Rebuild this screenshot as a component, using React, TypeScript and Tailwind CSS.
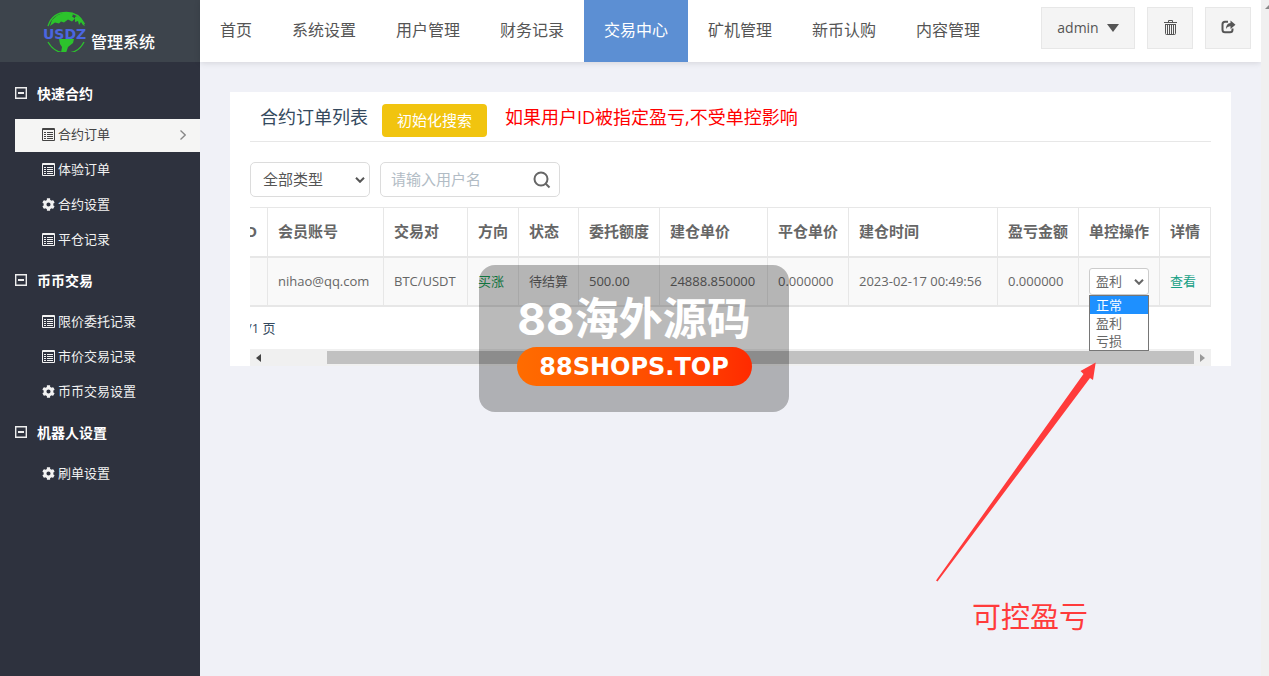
import { useState } from 'react';
import { FaCog } from 'react-icons/fa';

type IconName = 'list' | 'cog';

interface MenuItem {
  label: string;
  icon: IconName;
}

const topNav = ['首页', '系统设置', '用户管理', '财务记录', '交易中心', '矿机管理', '新币认购', '内容管理'];

const menu: { title: string; items: MenuItem[] }[] = [
  {
    title: '快速合约',
    items: [
      { label: '合约订单', icon: 'list' },
      { label: '体验订单', icon: 'list' },
      { label: '合约设置', icon: 'cog' },
      { label: '平仓记录', icon: 'list' },
    ],
  },
  {
    title: '币币交易',
    items: [
      { label: '限价委托记录', icon: 'list' },
      { label: '市价交易记录', icon: 'list' },
      { label: '币币交易设置', icon: 'cog' },
    ],
  },
  {
    title: '机器人设置',
    items: [{ label: '刷单设置', icon: 'cog' }],
  },
];

const outcomes = ['正常', '盈利', '亏损'];

function ListIcon() {
  return (
    <svg viewBox="0 0 13 13" className="size-[13px]" fill="none" stroke="currentColor" aria-hidden="true">
      <path d="M.5.5h12v12H.5zM.5 1.500h12" />
      <path d="M2 4.500h2M5 4.500h6M2 6.500h2M5 6.500h6M2 8.500h2M5 8.500h6M2 10.500h2M5 10.500h6" />
    </svg>
  );
}

function Chevron({ className }: { className: string }) {
  return (
    <svg viewBox="0 0 10 6" className={className} fill="none" stroke="currentColor" strokeWidth="2" aria-hidden="true">
      <path d="M1 .8l4 4 4-4" />
    </svg>
  );
}

function Logo() {
  return (
    <a href="#" className="flex h-[62px] items-center bg-[#3d444c] pl-[43px] text-white">
      <span className="relative flex h-[42px] w-[48px] items-center pt-[6px]">
        <svg viewBox="0 0 46 42" className="absolute inset-0 h-[42px] w-[46px]" aria-hidden="true">
          <path
            d="M5 16C8 7 15 2.500 23.500 2.500S38 7 41.500 14M5 32c4 7 10 11 18.500 11 8 0 14-4 17.500-11"
            fill="none"
            stroke="#2cc32c"
            strokeWidth="1.300"
          />
          <path
            d="M7 16l2-6 5-4.500 7-3 8 .5 1 2-1 1.500 3 2-3 3-4-2-4 3-3-1-2 2-4-1zM32 7l2-1 5 4 3 6-2-1-2-3-2 3-1-4-3 1zM16 29h15l-1 4-5 4-2 6h-5l1-6-2-3z"
            fill="#2cc32c"
          />
        </svg>
        <span className="relative font-['DejaVu_Sans',sans-serif] text-[14px] leading-[20px] font-bold text-[#4b66e0]">USDZ</span>
      </span>
      <span className="pt-[22px] text-[16px] leading-[20px] font-medium">管理系统</span>
    </a>
  );
}

function Sidebar() {
  const [active, setActive] = useState('合约订单');

  return (
    <aside className="w-[200px] shrink-0 bg-[#2e323e]">
      <Logo />
      <nav className="pt-[9px] text-[13px] text-white">
        {menu.map((group) => (
          <section key={group.title}>
            <h2 className="flex h-[47px] items-center gap-[10px] pb-[2px] pl-[15px] text-[14px] font-bold">
              <svg viewBox="0 0 12 12" className="mb-[2px] size-[12px]" fill="none" stroke="#eee" aria-hidden="true">
                <path d="M.7.7h10.600v10.600H.7z" strokeWidth="1.400" />
                <path d="M3 6h6" strokeWidth="2" />
              </svg>
              {group.title}
            </h2>
            <ul>
              {group.items.map((item) => (
                <li key={item.label} className="py-px pl-[15px]">
                  <a
                    href="#"
                    onClick={() => { setActive(item.label); }}
                    className={`flex h-[33px] items-center gap-[3px] pr-[14px] pb-[2px] pl-[27px] ${
                      active === item.label ? 'bg-[#f5f5f4] text-[#444]' : 'text-[#f2f2f2]'
                    }`}
                  >
                    {item.icon === 'list' ? <ListIcon /> : <FaCog className="size-[13px]" />}
                    {item.label}
                    {active === item.label && (
                      <svg viewBox="0 0 6 10" className="ml-auto h-[10px] w-[6px]" fill="none" stroke="#888" aria-hidden="true">
                        <path d="M.5.5L5.200 5 .5 9.500" strokeWidth="1.300" />
                      </svg>
                    )}
                  </a>
                </li>
              ))}
            </ul>
          </section>
        ))}
      </nav>
    </aside>
  );
}

function TopBar() {
  const buttonClass = 'flex h-[42px] items-center justify-center border border-[#e7e7e7] bg-[#f4f4f4] pb-[2px] text-[#555]';

  return (
    <header className="flex h-[62px] justify-between bg-white pr-[10px] shadow-[0_1px_6px_rgba(0,0,0,0.12)]">
      <nav className="flex text-[16px] text-[#555]">
        {topNav.map((label) => (
          <a
            key={label}
            href="#"
            className={`flex items-center px-5 pb-[2px] ${label === '交易中心' ? 'bg-[#5c8fd3] text-white' : ''}`}
          >
            {label}
          </a>
        ))}
      </nav>
      <div className="flex gap-3 pt-[7px]">
        <button className={`${buttonClass} w-[94px] gap-2 text-[14px]`}>
          admin
          <svg viewBox="0 0 12 8" className="mt-[2px] h-[8px] w-[12px]" fill="currentColor" aria-hidden="true">
            <path d="M0 0h12L6 8z" />
          </svg>
        </button>
        <button aria-label="清除缓存" className={`${buttonClass} w-[46px]`}>
          <svg viewBox="0 0 13 15" className="h-[15px] w-[13px]" fill="none" stroke="currentColor" aria-hidden="true">
            <path d="M0 2.500h13M4.500 2.500V.5h4v2M1 4.500h11" />
            <path d="M1.500 4.500v9q0 1 1 1h8q1 0 1-1v-9" />
            <path d="M3.500 5v9M5.500 5v9M7.500 5v9M9.500 5v9" />
          </svg>
        </button>
        <button aria-label="退出" className={`${buttonClass} w-[46px]`}>
          <svg viewBox="0 0 15 14" className="h-[14px] w-[15px]" fill="none" stroke="currentColor" aria-hidden="true">
            <path d="M7 1.800H4Q1.500 1.800 1.500 4.300v5.400q0 2.500 2.500 2.500h5q2.500 0 2.500-2.500V8.500" strokeWidth="2" />
            <path d="M9.500.5L14.500 4.700 9.500 9V6.300Q6.500 6 5 9 5 3.500 9.500 3z" fill="currentColor" stroke="none" />
          </svg>
        </button>
      </div>
    </header>
  );
}

function OutcomeSelect() {
  const [value, setValue] = useState('盈利');

  return (
    <div className="relative w-[60px]">
      <select
        aria-label="单控操作"
        value={value}
        onChange={(e) => { setValue(e.target.value); }}
        className="block h-[27px] w-full appearance-none rounded-[3px] border border-[#ccc] bg-white pl-[6px] text-[13px]"
      >
        {outcomes.map((o) => <option key={o}>{o}</option>)}
      </select>
      <Chevron className="pointer-events-none absolute top-[11px] right-[5px] h-[6px] w-[10px]" />
      <ul className="absolute top-[27px] left-0 z-10 w-full border border-[#767676] bg-white text-[13px] leading-[18px]">
        {outcomes.map((o) => (
          <li key={o} className={`pl-[6px] ${o === '正常' ? 'bg-[#1e90ff] text-white' : ''}`}>{o}</li>
        ))}
      </ul>
    </div>
  );
}

function OrderTable() {
  const columns = [
    { title: 'ID', width: 'w-[85px] text-right' },
    { title: '会员账号', width: 'w-[116px]' },
    { title: '交易对', width: 'w-[84px]' },
    { title: '方向', width: 'w-[51px]' },
    { title: '状态', width: 'w-[60px]' },
    { title: '委托额度', width: 'w-[81px]' },
    { title: '建仓单价', width: 'w-[108px]' },
    { title: '平仓单价', width: 'w-[81px]' },
    { title: '建仓时间', width: 'w-[149px]' },
    { title: '盈亏金额', width: 'w-[81px]' },
    { title: '单控操作', width: 'w-[81px]' },
    { title: '详情', width: 'w-[51px]' },
  ];
  const cell = 'border-r border-[#e7e7e7] pl-[10px]';

  return (
    <table className="w-full table-fixed border-separate border-spacing-0 text-left whitespace-nowrap text-[#666]">
      <thead>
        <tr className="h-[51px] text-[15px]">
          {columns.map((c) => (
            <th key={c.title} className={`border-t border-r border-b-2 border-[#e7e7e7] px-[10px] pb-[2px] font-bold ${c.width}`}>
              {c.title}
            </th>
          ))}
        </tr>
      </thead>
      <tbody>
        <tr className="h-[49px] bg-[#f9f9f9] text-[13px] [&>td]:border-b-2">
          <td className={cell} />
          <td className={cell}>nihao@qq.com</td>
          <td className={cell}>BTC/USDT</td>
          <td className={`${cell} text-[#18a058]`}>买涨</td>
          <td className={cell}>待结算</td>
          <td className={cell}>500.00</td>
          <td className={cell}>24888.850000</td>
          <td className={cell}>0.000000</td>
          <td className={cell}>2023-02-17 00:49:56</td>
          <td className={cell}>0.000000</td>
          <td className={cell}><OutcomeSelect /></td>
          <td className={cell}><a href="#" className="text-[#16a085]">查看</a></td>
        </tr>
      </tbody>
    </table>
  );
}

function Scrollbar() {
  return (
    <div className="flex h-[17px] items-center justify-between bg-[#f0f0f0] px-[6px]">
      <svg viewBox="0 0 5 8" className="h-[8px] w-[5px]" fill="#444" aria-hidden="true"><path d="M5 0v8L0 4z" /></svg>
      <div className="mr-[6px] ml-[66px] h-[13px] flex-1 bg-[#c1c1c1]" />
      <svg viewBox="0 0 5 8" className="h-[8px] w-[5px]" fill="#999" aria-hidden="true"><path d="M0 0v8l5-4z" /></svg>
    </div>
  );
}

function Watermark() {
  return (
    <div className="pointer-events-none absolute top-[265px] left-[479px] z-20 flex h-[147px] w-[310px] flex-col items-center rounded-2xl bg-black/27 pt-[26px] text-white">
      <div className="font-['Inter','Noto_Sans_CJK_SC',sans-serif] text-[44px] leading-[56px] font-bold">88海外源码</div>
      <div className="flex h-[39px] w-[235px] items-center justify-center rounded-full bg-linear-to-r from-[#ff6c00] to-[#ff2a00] font-['DejaVu_Sans',sans-serif] text-[24px] font-bold">
        88SHOPS.TOP
      </div>
    </div>
  );
}

function Annotation() {
  return (
    <div className="pointer-events-none absolute top-[362px] left-[936px] z-20 text-[#ff3b3b]">
      <svg viewBox="0 0 160 220" className="h-[220px] w-[160px]" fill="currentColor" aria-hidden="true">
        <path d="M159.700.500L157 18l-3-2L1.500 219.500l-1.500-1L147.500 12l-3-3z" />
      </svg>
      <p className="pt-[14px] pl-[36px] text-[29px] leading-[42px] whitespace-nowrap">可控盈亏</p>
    </div>
  );
}

export default function App() {
  return (
    <div className="relative flex min-h-screen bg-[#f0f1f7] font-['Open_Sans','Noto_Sans_CJK_SC',sans-serif]">
      <Sidebar />
      <div className="min-w-0 flex-1">
        <TopBar />
        <main className="p-[30px]">
          <section className="bg-white px-5">
            <div className="flex h-[50px] border-b border-[#e7e7e7] pl-[10px] text-[18px] leading-[50px]">
              <h1 className="text-[#34495e]">合约订单列表</h1>
              <button className="mt-3 ml-[14px] h-[33px] w-[105px] rounded-[4px] bg-[#f1c40f] text-[15px] leading-[33px] text-white">
                初始化搜索
              </button>
              <p className="ml-[18px] text-[#f00]">如果用户ID被指定盈亏,不受单控影响</p>
            </div>
            <form className="flex gap-[10px] pt-5 pb-[10px] text-[15px] text-[#555]">
              <div className="relative">
                <select
                  aria-label="类型"
                  className="block h-[35px] w-[120px] appearance-none rounded-[5px] border border-[#dcdcdc] bg-white pl-[12px]"
                >
                  <option>全部类型</option>
                </select>
                <Chevron className="pointer-events-none absolute top-[15px] right-[5px] h-[6px] w-[10px]" />
              </div>
              <div className="flex h-[35px] w-[180px] items-center rounded-[5px] border border-[#dcdcdc] pr-[8px] pl-[10px]">
                <input
                  aria-label="用户名"
                  placeholder="请输入用户名"
                  className="min-w-0 flex-1 outline-none placeholder:text-[#b2bcc5]"
                />
                <button type="button" aria-label="搜索">
                  <svg viewBox="0 0 18 18" className="size-[18px]" fill="none" stroke="#666" strokeWidth="2" aria-hidden="true">
                    <circle cx="8" cy="8" r="6.500" />
                    <path d="M12.500 12.500l4 4" />
                  </svg>
                </button>
              </div>
            </form>
            <div className="flex justify-end overflow-x-clip">
              <div className="w-[1028px] shrink-0">
                <OrderTable />
                <p className="h-[42px] pl-[64px] text-[13px] leading-[42px] text-[#34495e]">/1 页</p>
              </div>
            </div>
            <Scrollbar />
          </section>
        </main>
      </div>
      <div className="flex w-[8px] shrink-0 justify-end overflow-hidden bg-[#f0f0f0] pt-[5px]">
        <svg viewBox="0 0 4 4" className="size-[4px]" fill="#888" aria-hidden="true"><path d="M0 4l4-4v4z" /></svg>
      </div>
      <Watermark />
      <Annotation />
    </div>
  );
}
